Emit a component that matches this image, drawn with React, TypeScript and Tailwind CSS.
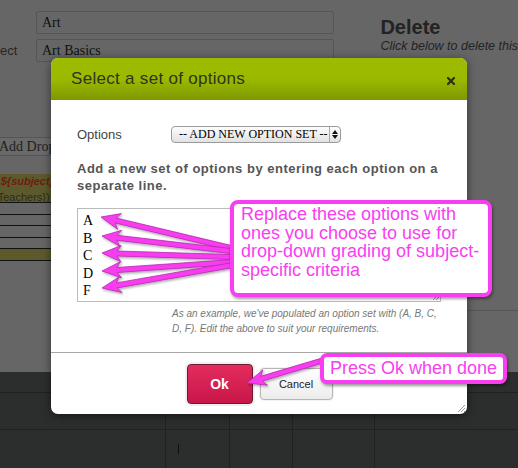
import React from 'react';

const MAGENTA = '#f83ef0';

type Arrow = { x1: number; y1: number; x2: number; y2: number };

// tail (x1,y1) -> tip (x2,y2)
function arrowPoints({ x1, y1, x2, y2 }: Arrow, shaft = 5, head = 16, headLen = 15) {
  const dx = x2 - x1;
  const dy = y2 - y1;
  const len = Math.sqrt(dx * dx + dy * dy);
  const ux = dx / len;
  const uy = dy / len;
  const px = -uy;
  const py = ux;
  const bx = x2 - ux * headLen;
  const by = y2 - uy * headLen;
  const s = shaft / 2;
  const h = head / 2;
  const pts = [
    [x1 + px * s, y1 + py * s],
    [bx + px * s, by + py * s],
    [bx + px * h - ux * 4, by + py * h - uy * 4],
    [x2, y2],
    [bx - px * h - ux * 4, by - py * h - uy * 4],
    [bx - px * s, by - py * s],
    [x1 - px * s, y1 - py * s],
  ];
  return pts.map((p) => `${p[0].toFixed(1)},${p[1].toFixed(1)}`).join(' ');
}

const arrows: Arrow[] = [
  { x1: 231, y1: 248, x2: 101, y2: 217 },
  { x1: 230, y1: 251, x2: 102, y2: 236 },
  { x1: 230, y1: 257, x2: 102, y2: 253 },
  { x1: 233, y1: 262, x2: 102, y2: 271 },
  { x1: 233, y1: 265, x2: 102, y2: 288 },
  { x1: 324, y1: 360, x2: 247, y2: 383 },
];

const Annotations: React.FC = () => (
  <svg className="absolute inset-0 pointer-events-none" width="518" height="468" viewBox="0 0 518 468">
    <defs>
      <filter id="sh" x="-20%" y="-20%" width="140%" height="140%">
        <feDropShadow dx="1" dy="1.5" stdDeviation="1.2" floodColor="#000" floodOpacity="0.35" />
      </filter>
    </defs>
    {arrows.map((a, i) => (
      <polygon
        key={i}
        points={arrowPoints(a)}
        fill={MAGENTA}
        stroke="#b42aae"
        strokeWidth="0.8"
        strokeLinejoin="round"
        filter="url(#sh)"
      />
    ))}
  </svg>
);

const TableRow: React.FC<{ yellow?: boolean; h: string }> = ({ yellow, h }) => (
  <div className={`${h} w-[300px] border-b border-[#111] ${yellow ? 'bg-[#5c5a2d]' : 'bg-[#666]'}`} />
);

const App: React.FC = () => {
  return (
    <div className="relative w-[518px] h-[468px] overflow-hidden bg-[#666] font-['Liberation_Sans',Arial,sans-serif]">
      {/* page behind the overlay */}
      <div className="flex flex-col h-full">
        <div className="h-[372px] flex flex-col">
          <div className="flex pt-[11px]">
            <div className="w-[36px] shrink-0 flex flex-col">
              <div className="h-[28px]" />
              <div className="text-[13px] text-[#262626] -ml-[26px] leading-[23px]">Subject</div>
            </div>
            <div className="w-[299px] flex flex-col gap-[5px]">
              <div className="h-[23px] border border-[#555] rounded-[2px] px-[5px] text-[14px] leading-[21px] text-[#111] font-['Liberation_Serif',serif]">
                Art
              </div>
              <div className="h-[23px] border border-[#555] rounded-[2px] px-[5px] text-[14px] leading-[21px] text-[#111] font-['Liberation_Serif',serif]">
                Art Basics
              </div>
            </div>
            <div className="ml-[46px] pt-[5px] whitespace-nowrap">
              <div className="text-[20px] font-bold text-[#232323] leading-[22px]">Delete</div>
              <div className="text-[12.5px] italic text-[#232323] leading-[16px]">Click below to delete this</div>
            </div>
          </div>
          <div className="mt-[75px] h-[19px] w-[60px] -ml-[8px] border border-[#555] bg-[#6a6a6a] text-[14px] leading-[17px] text-[#1e1e1e] font-['Liberation_Serif',serif] whitespace-nowrap pl-[6px]">
            Add Drop
          </div>
          <div className="h-[18px]" />
          <div className="h-[29px] w-[300px] bg-[#5c5a2d] border-b border-[#111] text-[11px] leading-[13px] whitespace-nowrap">
            <div className="-ml-[6px] pt-[1px] font-bold italic text-[#6e1c12]">- ${'{'}subject{'}'}</div>
            <div className="-ml-[6px] pt-[3px] text-[#2a2a20]">{'{'}Teachers{'}'})</div>
          </div>
          <TableRow h="h-[12px]" />
          <TableRow h="h-[11px]" />
          <TableRow h="h-[12px]" />
          <TableRow h="h-[11px]" />
          <TableRow h="h-[12px]" yellow />
          <div className="flex-1 flex flex-col items-end">
            <div className="h-[49px]" />
            <div className="w-[52px] border-t border-[#555]" />
          </div>
        </div>
        <div className="flex-1 bg-[#2c2e2d] flex flex-col">
          <div className="h-[21px] border-b border-[#202221] flex">
            <div className="w-[166px] border-r border-[#202221]" />
            <div className="w-[64px] border-r border-[#202221]" />
            <div className="w-[63px] border-r border-[#202221]" />
            <div className="w-[82px] border-r border-[#202221]" />
          </div>
          <div className="h-[37px] border-b border-[#202221] flex">
            <div className="w-[166px] border-r border-[#202221]" />
            <div className="w-[64px] border-r border-[#202221] relative">
              <div className="absolute left-[12px] top-[1px] w-px h-[6px] bg-[#111]" />
            </div>
            <div className="w-[63px] border-r border-[#202221]" />
            <div className="w-[82px] border-r border-[#202221]" />
          </div>
          <div className="flex-1 flex">
            <div className="w-[166px] border-r border-[#202221]" />
            <div className="w-[64px] border-r border-[#202221] relative">
              <div className="absolute left-[12px] top-[14px] w-px h-[10px] bg-[#111]" />
            </div>
            <div className="w-[63px] border-r border-[#202221]" />
            <div className="w-[82px] border-r border-[#202221]" />
          </div>
        </div>
      </div>

      {/* modal */}
      <div className="absolute left-[51px] top-[58px] w-[416px] h-[356px] bg-white rounded-[7px] overflow-hidden shadow-[0_2px_10px_rgba(0,0,0,0.5)] flex flex-col">
        <div className="h-[42px] shrink-0 bg-gradient-to-b from-[#9dbb00] via-[#9aba00] to-[#7f9800] flex items-center justify-between pl-[20px] pr-[12px]">
          <span className="text-[17px] text-[#2f3320] font-medium tracking-[0.3px]">Select a set of options</span>
          <svg width="8" height="8" viewBox="0 0 8 8" className="mt-[3px]">
            <path d="M1 1 L7 7 M7 1 L1 7" stroke="#2a2e1a" strokeWidth="2.2" strokeLinecap="square" />
          </svg>
        </div>
        <div className="flex-1 flex flex-col pl-[26px] pr-[25px]">
          <div className="flex items-center mt-[26px] h-[17px]">
            <span className="w-[94px] text-[13px] text-[#444]">Options</span>
            <div className="w-[170px] h-[17px] rounded-[4px] border border-[#9a9a9a] bg-gradient-to-b from-[#fdfdfd] to-[#e2e2e2] flex items-center">
              <span className="flex-1 pl-[7px] text-[12px] leading-[15px] text-black font-['Liberation_Serif',serif] whitespace-nowrap overflow-hidden">
                -- ADD NEW OPTION SET --
              </span>
              <div className="w-[11px] h-full border-l border-[#aaa] flex flex-col items-center justify-center gap-[1px]">
                <svg width="6" height="4" viewBox="0 0 6 4"><path d="M0 4 L3 0 L6 4Z" fill="#111" /></svg>
                <svg width="6" height="4" viewBox="0 0 6 4"><path d="M0 0 L3 4 L6 0Z" fill="#111" /></svg>
              </div>
            </div>
          </div>
          <p className="mt-[17px] text-[13px] leading-[17px] font-bold text-[#555] tracking-[0.5px]">
            Add a new set of options by entering each option on a separate line.
          </p>
          <div className="mt-[14px] w-[364px] h-[94px] border border-[#bbb] relative pl-[5px] pt-[3px] font-['Liberation_Serif',serif] text-[14px] leading-[17.6px] text-black">
            <div>A</div>
            <div>B</div>
            <div>C</div>
            <div>D</div>
            <div>F</div>
            <svg className="absolute right-[1px] bottom-[1px]" width="7" height="7" viewBox="0 0 7 7">
              <path d="M1 7 L7 1 M4 7 L7 4" stroke="#999" strokeWidth="1" />
            </svg>
          </div>
          <p className="mt-[4px] ml-[95px] w-[270px] text-[10px] leading-[15px] italic text-[#777]">
            As an example, we've populated an option set with (A, B, C, D, F). Edit the above to suit your requirements.
          </p>
        </div>
        <div className="h-[62px] shrink-0 border-t border-[#a8a8a8] flex justify-center items-start gap-[4px] pt-[9px] relative">
          <div className="p-[2px] rounded-[6px] bg-[#eef0f2]">
            <div className="w-[66px] h-[40px] rounded-[4px] border border-[#6b1a2e] bg-gradient-to-b from-[#e42b5e] to-[#c8164a] flex items-center justify-center text-white font-bold text-[14px]">
              Ok
            </div>
          </div>
          <div className="mt-[5px] p-[1px] rounded-[5px] bg-[#f2f2f2]">
            <div className="w-[73px] h-[32px] rounded-[4px] border border-[#b5b5b5] bg-gradient-to-b from-white to-[#ececec] flex items-center justify-center text-[11px] text-[#222]">
              Cancel
            </div>
          </div>
          <svg className="absolute right-[2px] bottom-[2px]" width="8" height="8" viewBox="0 0 8 8">
            <path d="M1 8 L8 1 M4 8 L8 4 M7 8 L8 7" stroke="#999" strokeWidth="1" />
          </svg>
        </div>
      </div>

      {/* annotation callouts */}
      <Annotations />
      <div className="absolute left-[230px] top-[200px] w-[262px] h-[97px] rounded-[8px] border-[4px] border-[#f83ef0] bg-white shadow-[1px_2px_3px_rgba(0,0,0,0.4)] pl-[7px] pt-[1px] text-[18px] leading-[18.6px] text-[#f83ef0] whitespace-nowrap">
        <div>Replace these options with</div>
        <div>ones you choose to use for</div>
        <div>drop-down grading of subject-</div>
        <div>specific criteria</div>
      </div>
      <div className="absolute left-[320px] top-[353px] w-[187px] h-[31px] rounded-[7px] border-[4px] border-[#f83ef0] bg-white shadow-[1px_2px_3px_rgba(0,0,0,0.4)] pl-[6px] text-[18px] leading-[23px] text-[#f83ef0] whitespace-nowrap">
        Press Ok when done
      </div>
    </div>
  );
};

export default App;
